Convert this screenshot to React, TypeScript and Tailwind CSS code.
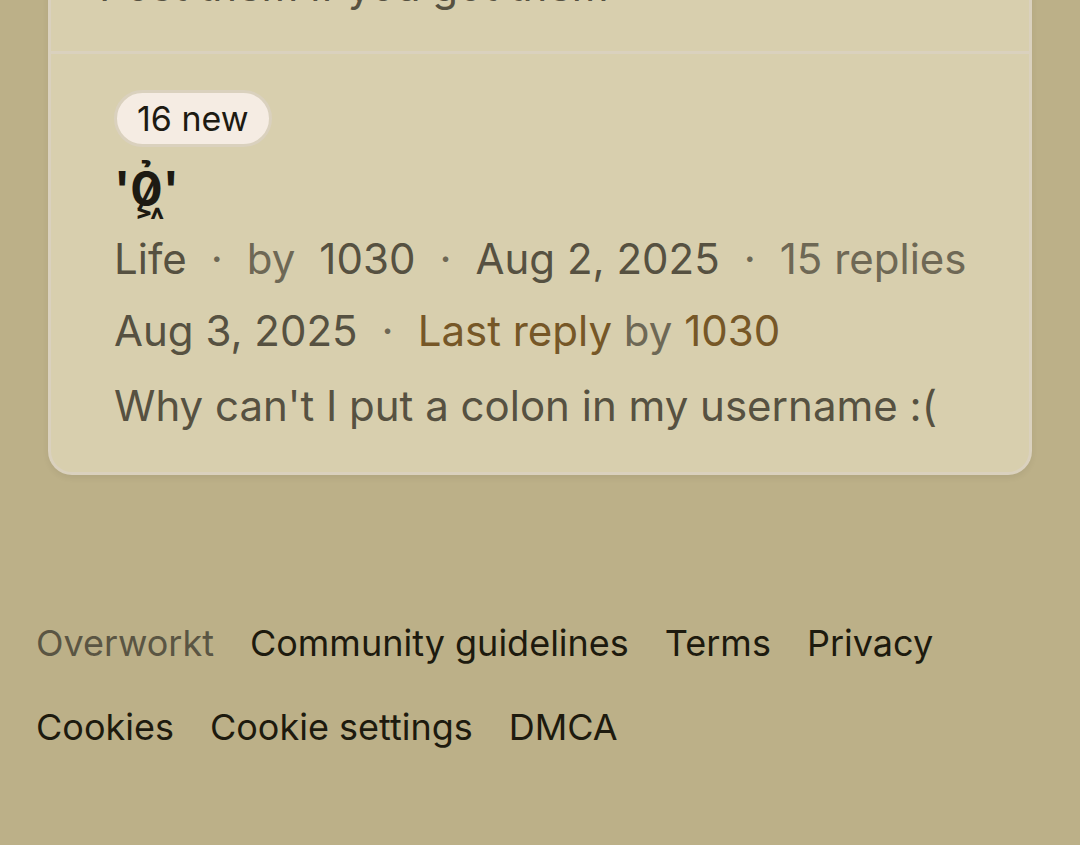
import React from "react";

const footerLinks = [
  "Community guidelines",
  "Terms",
  "Privacy",
  "Cookies",
  "Cookie settings",
  "DMCA",
];

const Dot = () => <span className="text-[#6e6855]">·</span>;

const ThreadItem = () => {
  return (
    <li className="pl-[63px] pr-12 py-9 text-[42px] leading-[60px] text-[#565141]">
      <span className="flex w-fit h-[57px] items-center rounded-full border-3 border-[#dad1be] bg-[#f5ece3] px-5 text-[34px] text-[#1d1a12]">
        16 new
      </span>
      <h2 className="mt-3 text-[48px] leading-[60px] font-bold text-[#1d1a12]">
        <a href="#thread">'0&#x0337;&#x0356;&#x0309;'</a>
      </h2>
      <div className="mt-[10px] flex flex-wrap gap-x-6">
        <a href="#life">Life</a>
        <Dot />
        <span className="text-[#6e6855]">by</span>
        <a href="#1030">1030</a>
        <Dot />
        <time>Aug 2, 2025</time>
        <Dot />
        <span className="text-[#6e6855]">15 replies</span>
      </div>
      <div className="mt-3 flex flex-wrap gap-x-6">
        <time>Aug 3, 2025</time>
        <Dot />
        <span className="text-[#6e6855]">
          <a href="#last" className="text-[#765727]">
            Last reply
          </a>{" "}
          by{" "}
          <a href="#1030" className="text-[#765727]">
            1030
          </a>
        </span>
      </div>
      <p className="mt-[15px]">Why can't I put a colon in my username :(</p>
    </li>
  );
};

const Footer = () => {
  return (
    <footer className="mt-[138px] px-9 pb-12 flex flex-wrap gap-x-9 gap-y-6 text-[36px] leading-[60px] text-[#1d1a0e]">
      <span className="text-[#5a5543]">Overworkt</span>
      {footerLinks.map((link) => (
        <a key={link} href="#footer">
          {link}
        </a>
      ))}
    </footer>
  );
};

const App = () => {
  return (
    <div className="min-h-screen overflow-hidden bg-[#bcb088] font-['Inter',sans-serif]">
      <ul className="mx-12 rounded-b-[24px] border-3 border-t-0 border-[#dad1be] bg-[#d8cfae] shadow-[0_3px_6px_rgba(0,0,0,0.06)]">
        <li className="border-b-3 border-[#dad1be] px-12 pb-[35px] text-[42px] leading-[60px] text-[#565141]">
          <p className="-mt-11">Post them if you got them</p>
        </li>
        <ThreadItem />
      </ul>
      <Footer />
    </div>
  );
};

export default App;
